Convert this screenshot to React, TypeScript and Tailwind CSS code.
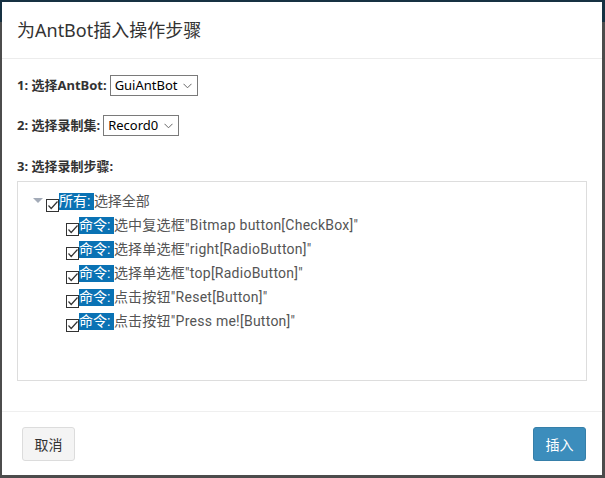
import React from "react";

const cjk = "'Noto Sans','Noto Sans CJK SC',sans-serif";
const treeFont = "Roboto,'Noto Sans CJK SC',sans-serif";

function Check() {
  return (
    <svg width="13" height="13" viewBox="0 0 13 13" className="shrink-0">
      <rect x="0.5" y="0.5" width="12" height="12" fill="#fff" stroke="#333" strokeWidth="1" />
      <polyline points="2.5,6.5 5.2,9.5 11.5,2.5" fill="none" stroke="#333" strokeWidth="1.2" />
    </svg>
  );
}

function Chevron() {
  return (
    <svg width="9" height="6" viewBox="0 0 9 6" className="shrink-0">
      <polyline points="0.5,0.8 4.5,4.8 8.5,0.8" fill="none" stroke="#666" strokeWidth="1" />
    </svg>
  );
}

function Select({ value, width }: { value: string; width: string }) {
  return (
    <div
      className={`flex h-[21px] items-center justify-between border border-[#7a7a7a] bg-white pl-[4px] pr-[5px] text-[13px] text-black ${width}`}
      style={{ fontFamily: cjk }}
    >
      <span className="leading-none">{value}</span>
      <Chevron />
    </div>
  );
}

const items = [
  '选中复选框"Bitmap button[CheckBox]"',
  '选择单选框"right[RadioButton]"',
  '选择单选框"top[RadioButton]"',
  '点击按钮"Reset[Button]"',
  '点击按钮"Press me![Button]"',
];

export default function App() {
  return (
    <div className="relative h-[478px] w-[605px] overflow-hidden bg-[#4c4c4c]">
      <div className="absolute inset-x-0 top-0 h-[22px] bg-[#163142]" />
      <div className="absolute left-[2px] top-[2px] flex h-[473px] w-[600px] flex-col bg-white">
        {/* header */}
        <div className="flex h-[57px] shrink-0 items-center border-b border-[#ececec] px-[15px]">
          <span className="text-[18px] leading-none text-[#333]" style={{ fontFamily: cjk }}>
            为AntBot插入操作步骤
          </span>
        </div>
        {/* body */}
        <div className="flex flex-1 flex-col px-[15px] text-[13px] text-[#333]" style={{ fontFamily: cjk }}>
          <div className="mt-[16px] flex h-[21px] items-center gap-[3px]">
            <span className="font-bold">1: 选择AntBot:</span>
            <Select value="GuiAntBot" width="w-[88px]" />
          </div>
          <div className="mt-[19px] flex h-[21px] items-center gap-[3px]">
            <span className="font-bold">2: 选择录制集:</span>
            <Select value="Record0" width="w-[76px]" />
          </div>
          <div className="mt-[20px] flex h-[21px] items-center">
            <span className="font-bold">3: 选择录制步骤:</span>
          </div>
          <div
            className="mt-[4px] h-[200px] w-[570px] border border-[#dddddd] pt-[11px] text-[14px] text-[#555]"
            style={{ fontFamily: treeFont }}
          >
            <div className="flex h-[24px] items-start pl-[15px]">
              <svg width="10" height="5" viewBox="0 0 10 5" className="mt-[5px] shrink-0">
                <polygon points="0,0 10,0 5,5" fill="#a3abb8" />
              </svg>
              <span className="ml-[3px] mt-[6px]">
                <Check />
              </span>
              <span className="h-[17px] whitespace-pre bg-[#0a72b4] leading-[17px] text-white">所有: </span>
              <span className="h-[17px] leading-[17px]">选择全部</span>
            </div>
            {items.map((t) => (
              <div key={t} className="flex h-[24px] items-start pl-[48px]">
                <span className="mt-[6px]">
                  <Check />
                </span>
                <span className="h-[17px] whitespace-pre bg-[#0a72b4] leading-[17px] text-white">命令: </span>
                <span className="h-[17px] whitespace-nowrap leading-[17px] tracking-[0.25px]">{t}</span>
              </div>
            ))}
          </div>
        </div>
        {/* footer */}
        <div
          className="flex h-[64px] shrink-0 items-start justify-between border-t border-[#efefef] pl-[20px] pr-[16px] pt-[15px]"
          style={{ fontFamily: cjk }}
        >
          <button className="flex h-[34px] w-[53px] items-center justify-center rounded-[3px] border border-[#dcdcdc] bg-[#f4f4f4] text-[14px] text-[#333]">
            取消
          </button>
          <button className="flex h-[34px] w-[53px] items-center justify-center rounded-[3px] border border-[#367fa9] bg-[#3c8dbc] text-[14px] text-white">
            插入
          </button>
        </div>
      </div>
    </div>
  );
}
